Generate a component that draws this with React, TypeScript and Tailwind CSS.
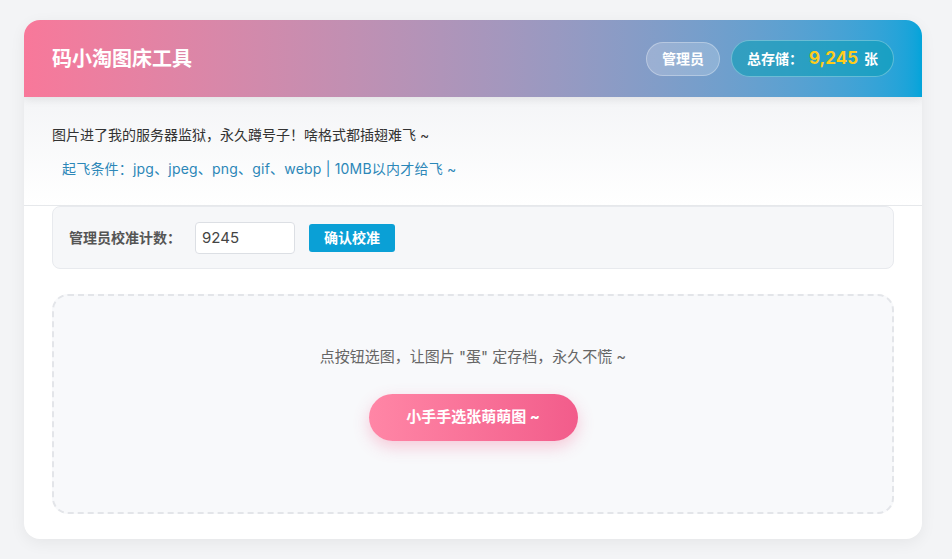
import React, { useState } from 'react';

/** Upload formats shown in the "起飞条件" line. */
const FORMATS = ['jpg', 'jpeg', 'png', 'gif', 'webp'];

const FONT = "font-['Inter','Noto_Sans_CJK_SC',sans-serif]";

/** Header pills: admin tag and the running total. */
const HeaderStats: React.FC<{ total: number }> = ({ total }) => (
  <div className="flex items-center gap-[11px]">
    <span className="flex h-[34px] items-center rounded-full border border-white/30 bg-white/20 px-[15px] text-[14px] font-bold text-white">
      管理员
    </span>
    <span className="flex h-[37px] items-center rounded-full border border-white/30 bg-[#0e9fb8]/60 px-[15px] text-[14px] font-bold text-white">
      总存储：
      <span className="ml-[6px] mr-[6px] text-[17px] font-bold text-[#ffcc1a]">{total.toLocaleString('en-US')}</span>
      张
    </span>
  </div>
);

const AdminCalibrate: React.FC<{ value: string; onChange: (v: string) => void }> = ({ value, onChange }) => (
  <div className="flex h-[63px] items-center gap-[14px] rounded-lg border border-[#e8eaee] bg-[#f6f7f9] px-4">
    <span className="text-[14px] font-bold text-[#555]">管理员校准计数：</span>
    <input
      value={value}
      onChange={(e) => onChange(e.target.value)}
      className="h-[32px] w-[100px] rounded border border-[#dcdfe4] bg-white px-[6px] text-[15px] text-[#444] outline-none"
    />
    <button
      type="button"
      className="h-[28px] w-[86px] rounded-[3px] bg-[#0aa0d6] text-[14px] font-bold text-white"
    >
      确认校准
    </button>
  </div>
);

export default function App() {
  const [count, setCount] = useState('9245');

  return (
    <div className={`min-h-screen bg-[#f3f4f6] pl-6 pr-[30px] pt-5 ${FONT}`}>
      <div className="overflow-hidden rounded-2xl bg-white shadow-[0_4px_16px_rgba(0,0,0,0.06)]">
        <header className="relative z-10 flex h-[77px] items-center justify-between bg-gradient-to-r from-[#f8789a] to-[#02a4da] px-7 shadow-[0_3px_8px_rgba(0,0,0,0.08)]">
          <h1 className="text-[20px] font-bold text-white">码小淘图床工具</h1>
          <HeaderStats total={9245} />
        </header>

        <div className="border-b border-[#e6e8eb] bg-gradient-to-b from-[#f4f5f7] to-white px-7 pb-[26px] pt-[27px]">
          <p className="text-[14px] leading-[21px] text-[#333]">图片进了我的服务器监狱，永久蹲号子！啥格式都插翅难飞 ~</p>
          <p className="mt-[13px] pl-[10px] text-[14px] leading-[21px] tracking-[0.2px] text-[#2c87b8]">
            起飞条件：{FORMATS.join('、')} | 10MB以内才给飞 ~
          </p>
        </div>

        <div className="px-7 pb-[25px]">
          <AdminCalibrate value={count} onChange={setCount} />

          <div className="mt-[25px] flex h-[220px] flex-col items-center rounded-2xl border-2 border-dashed border-[#e3e5e9] bg-[#f8f9fb] pt-[50px]">
            <p className="text-[15px] leading-[22px] text-[#666]">点按钮选图，让图片 "蛋" 定存档，永久不慌 ~</p>
            <button
              type="button"
              className="mt-[26px] h-[47px] w-[209px] rounded-full bg-gradient-to-r from-[#ff86a6] to-[#f25c8b] text-[15px] font-bold text-white shadow-[0_6px_16px_rgba(242,92,139,0.3)]"
            >
              小手手选张萌萌图 ~
            </button>
          </div>
        </div>
      </div>
    </div>
  );
}
